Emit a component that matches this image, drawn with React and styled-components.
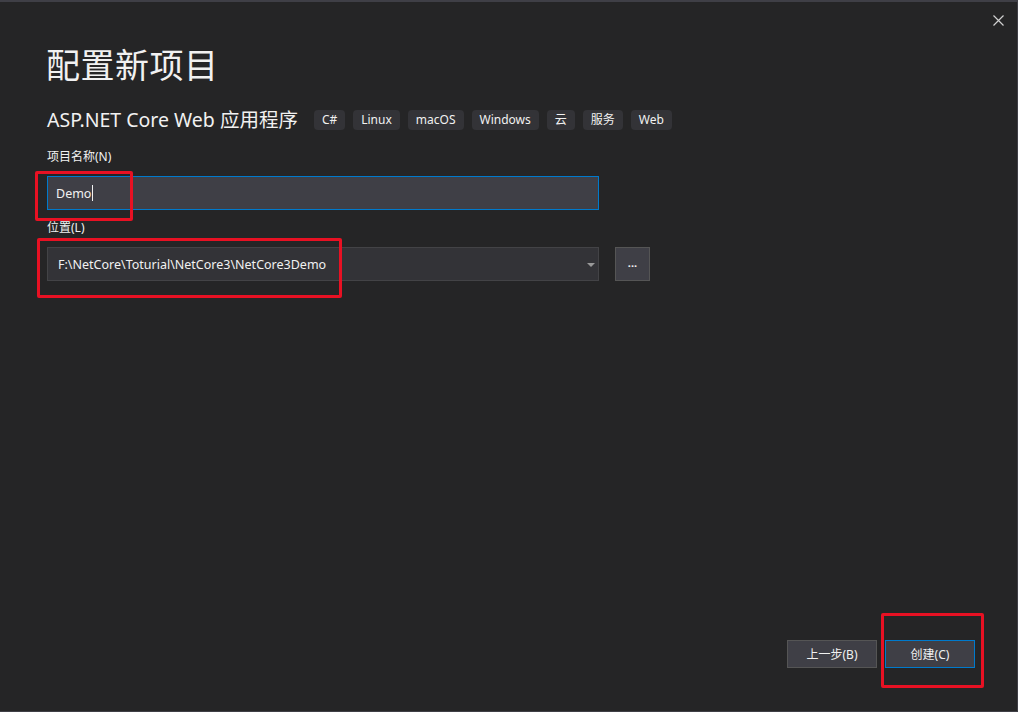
import React, { useState } from "react";
import styled, { createGlobalStyle } from "styled-components";

const GlobalStyle = createGlobalStyle`
  html, body {
    margin: 0;
    padding: 0;
    background: #252526;
  }
  * {
    box-sizing: border-box;
  }
`;

const font = `"Noto Sans", "Noto Sans CJK SC", sans-serif`;

const Window = styled.div`
  position: relative;
  width: 1018px;
  height: 712px;
  background: #252526;
  border-top: 2px solid #3f3f46;
  border-bottom: 1px solid #3f3f46;
  border-right: 1px solid #3f3f46;
  display: flex;
  flex-direction: column;
  padding: 0 0 0 47px;
  font-family: ${font};
  color: #f1f1f1;
`;

const Close = styled.button`
  position: absolute;
  top: 9px;
  right: 10px;
  width: 18px;
  height: 18px;
  padding: 0;
  border: none;
  background: transparent;
  display: flex;
  align-items: center;
  justify-content: center;
`;

const Title = styled.h1`
  margin: 39px 0 0 -1px;
  font-size: 34px;
  line-height: 48px;
  font-weight: 400;
  letter-spacing: 0.5px;
`;

const SubRow = styled.div`
  display: flex;
  align-items: center;
  margin-top: 18px;
`;

const Subtitle = styled.h2`
  margin: 0 16px 0 0;
  font-size: 19.5px;
  line-height: 26px;
  font-weight: 400;
`;

const Tags = styled.div`
  display: flex;
  gap: 8px;
`;

const Tag = styled.span`
  height: 20px;
  padding: 0 8px;
  background: #333337;
  border-radius: 4px;
  font-size: 12px;
  line-height: 20px;
  color: #f1f1f1;
`;

const Field = styled.div`
  display: flex;
  flex-direction: column;
  margin-top: ${(p) => p.$top}px;
`;

const Label = styled.label`
  font-size: 12px;
  line-height: 16px;
  color: #f1f1f1;
  margin-bottom: ${(p) => p.$gap}px;
`;

const FieldRow = styled.div`
  display: flex;
  gap: 16px;
`;

const TextBox = styled.div`
  width: 552px;
  height: 34px;
  display: flex;
  align-items: center;
  padding-left: ${(p) => p.$pad}px;
  background: ${(p) => (p.$focused ? "#3f3f46" : "#333337")};
  border: 1px solid ${(p) => (p.$focused ? "#007acc" : "#434346")};
  font-size: 12.5px;
  color: #f1f1f1;
  position: relative;
`;

const Caret = styled.span`
  display: inline-block;
  width: 1px;
  height: 16px;
  background: #f1f1f1;
  margin-left: 1px;
`;

const Arrow = styled.span`
  position: absolute;
  right: 3px;
  top: 15px;
  width: 0;
  height: 0;
  border-left: 4px solid transparent;
  border-right: 4px solid transparent;
  border-top: 4px solid #999999;
`;

const Browse = styled.button`
  width: 35px;
  height: 34px;
  background: #3f3f46;
  border: 1px solid #555555;
  color: #f1f1f1;
  font-family: ${font};
  font-size: 11px;
  font-weight: 700;
  padding: 0 0 4px;
`;

const Spacer = styled.div`
  flex: 1;
`;

const Footer = styled.div`
  display: flex;
  justify-content: flex-end;
  gap: 8px;
  padding-right: 42px;
  margin-bottom: 43px;
`;

const Button = styled.button`
  width: 90px;
  height: 28px;
  background: #3f3f46;
  border: 1px solid ${(p) => (p.$primary ? "#007acc" : "#555555")};
  color: #f1f1f1;
  font-family: ${font};
  font-size: 12px;
  padding: 0;
`;

const Mark = styled.div`
  position: absolute;
  border: 3px solid #e81123;
  border-radius: 2px;
  left: ${(p) => p.$x}px;
  top: ${(p) => p.$y}px;
  width: ${(p) => p.$w}px;
  height: ${(p) => p.$h}px;
  pointer-events: none;
`;

const tags = ["C#", "Linux", "macOS", "Windows", "云", "服务", "Web"];

export default function App() {
  const [name] = useState("Demo");

  return (
    <>
      <GlobalStyle />
      <Window>
        <Close aria-label="关闭">
          <svg width="11" height="11" viewBox="0 0 11 11">
            <path d="M0.5 0.5 L10.5 10.5 M10.5 0.5 L0.5 10.5" stroke="#d0d0d0" strokeWidth="1.2" />
          </svg>
        </Close>

        <Title>配置新项目</Title>

        <SubRow>
          <Subtitle>ASP.NET Core Web 应用程序</Subtitle>
          <Tags>
            {tags.map((t) => (
              <Tag key={t}>{t}</Tag>
            ))}
          </Tags>
        </SubRow>

        <Field $top={16}>
          <Label $gap={11}>项目名称(N)</Label>
          <TextBox $focused $pad={8}>
            {name}
            <Caret />
          </TextBox>
        </Field>

        <Field $top={10}>
          <Label $gap={11}>位置(L)</Label>
          <FieldRow>
            <TextBox $pad={10}>
              F:\NetCore\Toturial\NetCore3\NetCore3Demo
              <Arrow />
            </TextBox>
            <Browse>...</Browse>
          </FieldRow>
        </Field>

        <Spacer />

        <Footer>
          <Button>上一步(B)</Button>
          <Button $primary>创建(C)</Button>
        </Footer>

        <Mark $x={35} $y={169} $w={98} $h={50} />
        <Mark $x={37} $y={236} $w={305} $h={60} />
        <Mark $x={881} $y={611} $w={103} $h={75} />
      </Window>
    </>
  );
}
